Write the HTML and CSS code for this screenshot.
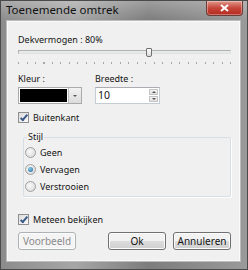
FILE: index.html
```html
<!DOCTYPE html>
<html lang="nl">
<head>
    <meta charset="UTF-8">
    <title>Toenemende omtrek</title>
    <link rel="stylesheet" href="styles.css">
</head>
<body>
    <div class="window">
        <!-- Title bar -->
        <div class="titlebar">
            <span class="title">Toenemende omtrek</span>
            <button class="close">
                <svg width="9" height="8" viewBox="0 0 9 8">
                    <path d="M1 1 L8 7 M8 1 L1 7" stroke="#fff" stroke-width="2"/>
                </svg>
            </button>
        </div>

        <div class="client">
            <div class="label">Dekvermogen : 80%</div>

            <!-- Opacity slider -->
            <div class="slider">
                <div class="track"></div>
                <div class="thumb"></div>
                <div class="ticks"></div>
            </div>

            <div class="fields">
                <div class="field">
                    <div class="label">Kleur :</div>
                    <div class="color-combo">
                        <div class="swatch"></div>
                        <div class="drop"><span class="arrow"></span></div>
                    </div>
                </div>
                <div class="field">
                    <div class="label">Breedte :</div>
                    <div class="spinner">
                        <span class="value">10</span>
                        <div class="spin-buttons">
                            <div class="spin up"><span class="arrow-up"></span></div>
                            <div class="spin down"><span class="arrow"></span></div>
                        </div>
                    </div>
                </div>
            </div>

            <label class="check">
                <span class="box checked"></span>
                Buitenkant
            </label>

            <!-- Style group -->
            <fieldset class="group">
                <legend>Stijl</legend>
                <label class="radio"><span class="circle"></span>Geen</label>
                <label class="radio"><span class="circle selected"></span>Vervagen</label>
                <label class="radio"><span class="circle"></span>Verstrooien</label>
            </fieldset>

            <label class="check preview">
                <span class="box checked"></span>
                Meteen bekijken
            </label>

            <div class="buttons">
                <button class="btn disabled">Voorbeeld</button>
                <span class="spacer"></span>
                <button class="btn">Ok</button>
                <button class="btn">Annuleren</button>
            </div>
        </div>
    </div>
</body>
</html>
```

FILE: styles.css
```css
/* Page reset */
body {
    margin: 0;
    font-family: "Noto Sans", "Open Sans", sans-serif;
    font-size: 9px;
    color: #141414;
}

/* Window frame */
.window {
    width: 248px;
    height: 270px;
    display: flex;
    flex-direction: column;
    box-sizing: border-box;
    background: linear-gradient(to right, #8c8c8c, #a6a6a6 30%, #7d7d7d 60%, #9a9a9a);
    border: 1px solid #4a4a4a;
}

.titlebar {
    height: 19px;
    display: flex;
    align-items: flex-start;
    justify-content: space-between;
    background: linear-gradient(to bottom, rgba(255,255,255,0.25), rgba(255,255,255,0));
}

.title {
    margin: 1px 0 0 5px;
    font-size: 11.5px;
    color: #111;
}

.close {
    width: 37px;
    height: 15px;
    margin-right: 4px;
    padding: 0;
    border: 1px solid #6e3c38;
    border-top: none;
    border-radius: 0 0 4px 4px;
    background: linear-gradient(to bottom, #e09a8c, #c7463a 50%, #b32a1f);
    display: flex;
    align-items: center;
    justify-content: center;
    box-shadow: inset 0 0 0 1px rgba(255,255,255,0.35);
}

/* Client area */
.client {
    flex: 1;
    margin: 0 6px 7px 5px;
    padding: 12px 9px 0 11px;
    background: #f0f0f0;
    border: 1px solid #bcbcbc;
    box-shadow: inset 0 0 0 1px #fafafa;
    display: flex;
    flex-direction: column;
}

.label {
    height: 14px;
    line-height: 14px;
}

/* Slider */
.slider {
    position: relative;
    height: 20px;
}

.track {
    position: absolute;
    left: 0;
    right: 0;
    top: 3px;
    height: 2px;
    background: #e7eaea;
    border: 1px solid #b0b0b0;
    border-right-color: #e0e0e0;
    border-bottom-color: #e0e0e0;
}

.thumb {
    position: absolute;
    left: 60%;
    top: 1px;
    width: 4px;
    height: 7px;
    background: linear-gradient(to bottom, #fdfdfd, #dcdcdc);
    border: 1px solid #707070;
    border-radius: 1px 1px 2px 2px;
}

.ticks {
    position: absolute;
    left: 0;
    right: 0;
    top: 15px;
    height: 2px;
    background: repeating-linear-gradient(to right, #a8a8a8 0 1px, transparent 1px 8.5px);
}

/* Color and width fields */
.fields {
    display: flex;
    gap: 13px;
    margin-top: 5px;
}

.field .label {
    margin-bottom: 1px;
}

.color-combo {
    width: 64px;
    height: 17px;
    box-sizing: border-box;
    display: flex;
    border: 1px solid #aaa;
    background: #fff;
}

.swatch {
    flex: 1;
    background: #000;
    margin: 1px;
}

.drop {
    width: 12px;
    background: linear-gradient(to bottom, #f2f2f2, #dcdcdc);
    border-left: 1px solid #bbb;
    display: flex;
    align-items: center;
    justify-content: center;
}

.arrow {
    border-left: 2px solid transparent;
    border-right: 2px solid transparent;
    border-top: 2px solid #555;
}

.arrow-up {
    border-left: 2px solid transparent;
    border-right: 2px solid transparent;
    border-bottom: 2px solid #555;
}

.spinner {
    width: 65px;
    height: 17px;
    box-sizing: border-box;
    display: flex;
    border: 1px solid #c5cbd2;
    border-top-color: #abadb3;
    background: #fff;
}

.value {
    flex: 1;
    padding-left: 2px;
    font-size: 10.5px;
    line-height: 15px;
}

.spin-buttons {
    width: 9px;
    display: flex;
    flex-direction: column;
    gap: 1px;
    padding: 1px;
}

.spin {
    flex: 1;
    background: linear-gradient(to bottom, #f4f4f4, #dedede);
    border: 1px solid #c4c4c4;
    display: flex;
    align-items: center;
    justify-content: center;
}

/* Checkboxes */
.check {
    display: flex;
    align-items: center;
    gap: 4px;
    height: 14px;
    margin-top: 6px;
}

.box {
    width: 9px;
    height: 9px;
    border: 1px solid #8e8f8f;
    background: linear-gradient(135deg, #dcdcdc, #fafafa);
    position: relative;
}

.box.checked::after {
    content: "";
    position: absolute;
    left: 3px;
    top: 0;
    width: 2px;
    height: 6px;
    border-right: 2px solid #3b5a8a;
    border-bottom: 2px solid #3b5a8a;
    transform: rotate(40deg);
}

/* Style group */
.group {
    margin: 6px 0 0 5px;
    padding: 0 2px 1px 1px;
    border: 1px solid #d5dfe5;
    box-shadow: 1px 1px 0 #fff;
    border-radius: 2px;
}

.group legend {
    padding: 0 1px;
    margin-left: 2px;
    line-height: 14px;
}

.radio {
    display: flex;
    align-items: center;
    gap: 4px;
    height: 17px;
}

.circle {
    width: 9px;
    height: 9px;
    border-radius: 50%;
    border: 1px solid #a0a0a0;
    background: radial-gradient(circle at 40% 40%, #fafafa, #d4d4d4);
    position: relative;
}

.circle.selected::after {
    content: "";
    position: absolute;
    left: 2px;
    top: 2px;
    width: 5px;
    height: 5px;
    border-radius: 50%;
    background: radial-gradient(circle at 40% 35%, #8ad0f0, #1a5d8a);
}

.preview {
    margin-top: 15px;
}

/* Dialog buttons */
.buttons {
    display: flex;
    gap: 7px;
    margin-top: 6px;
}

.spacer {
    flex: 1;
}

.btn {
    width: 58px;
    height: 18px;
    padding: 0;
    font-family: inherit;
    font-size: 10px;
    color: #141414;
    border: 1px solid #707070;
    border-radius: 3px;
    background: linear-gradient(to bottom, #f2f2f2 50%, #dddddd 50%, #cfcfcf);
    box-shadow: inset 0 0 0 1px #fcfcfc;
}

.btn.disabled {
    color: #8b8b8b;
    border-color: #adb2b5;
    background: #f4f4f4;
}
```
